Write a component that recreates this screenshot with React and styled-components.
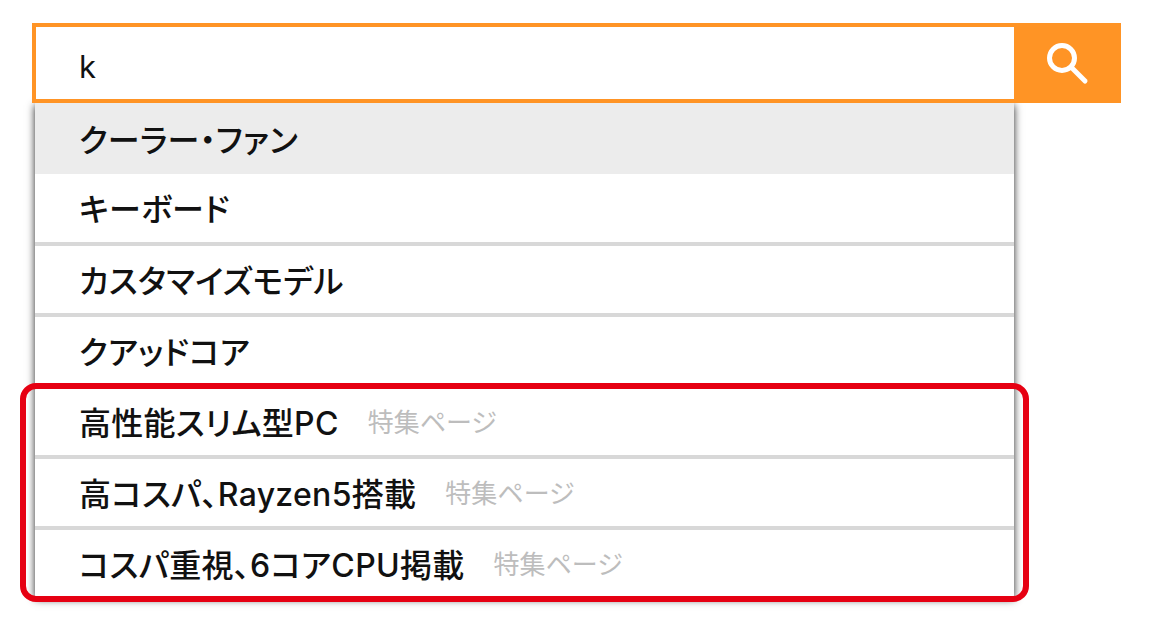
import React from "react";
import styled, { createGlobalStyle } from "styled-components";

const suggestions = [
  { label: "クーラー・ファン", active: true },
  { label: "キーボード" },
  { label: "カスタマイズモデル" },
  { label: "クアッドコア" },
  { label: "高性能スリム型PC", tag: "特集ページ" },
  { label: "高コスパ、Rayzen5搭載", tag: "特集ページ" },
  { label: "コスパ重視、6コアCPU掲載", tag: "特集ページ" },
];

const GlobalStyle = createGlobalStyle`
  * {
    box-sizing: border-box;
  }

  body {
    margin: 0;
    background: #fff;
    font-family: Inter, "Noto Sans CJK JP", sans-serif;
    color: #111;
  }
`;

const Page = styled.div`
  position: relative;
  width: 1150px;
  height: 620px;
  padding: 23px 29px 0 32px;
  overflow: hidden;
`;

const SearchBar = styled.form`
  display: flex;
  height: 80px;
`;

const SearchInput = styled.input`
  flex: 1;
  min-width: 0;
  height: 100%;
  padding: 7px 43px 0;
  border: 4px solid #ff9425;
  border-right: none;
  outline: none;
  font-family: inherit;
  font-size: 31px;
  color: #111;
`;

const SearchButton = styled.button`
  display: flex;
  align-items: center;
  justify-content: center;
  width: 107px;
  height: 100%;
  padding: 0 3px 3px 0;
  border: none;
  background: #ff9425;
`;

const Dropdown = styled.ul`
  width: 979px;
  margin: 0 0 0 3px;
  padding: 0;
  list-style: none;
  background: #fff;
  box-shadow: 0 2px 8px rgba(0, 0, 0, 0.85);
`;

const Row = styled.li`
  display: flex;
  align-items: center;
  gap: 29px;
  height: 71px;
  padding: 0 44px 2px;
  background: #fff;
  border-bottom: 4px solid #d8d8d8;
  font-size: 32px;
  font-weight: 500;
  letter-spacing: 0.3px;
  font-feature-settings: "palt";

  &:first-child {
    background: #ececec;
    border-bottom: none;
  }

  &:nth-child(2) {
    height: 72px;
  }

  &:last-child {
    height: 67px;
    border-bottom: none;
  }
`;

const Tag = styled.span`
  font-size: 26px;
  font-weight: 400;
  letter-spacing: 0;
  color: #bdbdbd;
`;

const Highlight = styled.div`
  position: absolute;
  left: 20px;
  top: 383px;
  width: 1009px;
  height: 219px;
  border: 6px solid #e60012;
  border-radius: 16px;
  pointer-events: none;
`;

const SearchIcon = () => (
  <svg width="48" height="48" viewBox="0 0 48 48" fill="none">
    <circle cx="20" cy="20" r="12.5" stroke="#fff" strokeWidth="5" />
    <path d="M30 30 L43 43" stroke="#fff" strokeWidth="5" strokeLinecap="round" />
  </svg>
);

export default function App() {
  return (
    <Page>
      <GlobalStyle />
      <SearchBar onSubmit={(e) => e.preventDefault()}>
        <SearchInput value="k" readOnly />
        <SearchButton type="submit">
          <SearchIcon />
        </SearchButton>
      </SearchBar>
      <Dropdown>
        {suggestions.map((item) => (
          <Row key={item.label}>
            <span>{item.label}</span>
            {item.tag && <Tag>{item.tag}</Tag>}
          </Row>
        ))}
      </Dropdown>
      <Highlight />
    </Page>
  );
}
